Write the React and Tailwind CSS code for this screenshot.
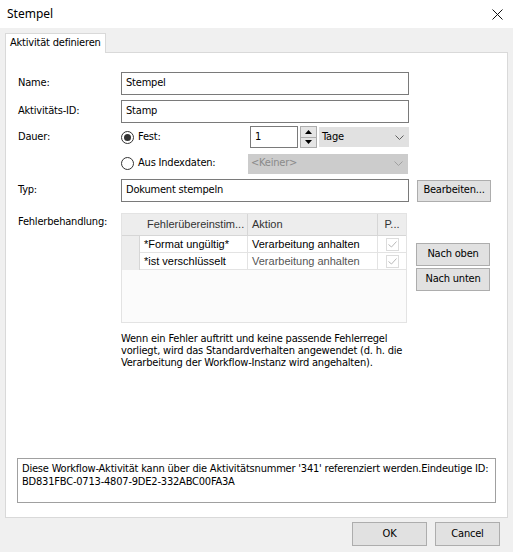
import React from "react";

const font = { fontFamily: '"DejaVu Sans Condensed", "Liberation Sans", sans-serif', letterSpacing: "-0.2px" };

const Chevron = ({ color = "#606060" }) => (
  <svg width="9" height="5" viewBox="0 0 9 5" fill="none">
    <path d="M0.5 0.5 L4.5 4.5 L8.5 0.5" stroke={color} strokeWidth="1" />
  </svg>
);

const Radio = ({ checked }) => (
  <span className="flex h-[13px] w-[13px] items-center justify-center rounded-full border border-[#333] bg-white">
    {checked && <span className="h-[7px] w-[7px] rounded-full bg-[#333]" />}
  </span>
);

const Check = () => (
  <span className="flex h-[13px] w-[13px] items-center justify-center border border-[#dcdcdc] bg-white">
    <svg width="9" height="7" viewBox="0 0 9 7" fill="none">
      <path d="M0.5 3.5 L3.5 6 L8.5 0.5" stroke="#b8b8b8" strokeWidth="1" />
    </svg>
  </span>
);

const Button = ({ children, className = "" }) => (
  <button className={"flex items-center justify-center border border-[#adadad] bg-[#e1e1e1] text-[11px] text-black " + className}>
    {children}
  </button>
);

const Label = ({ children, className = "" }) => (
  <div className={"w-[115px] shrink-0 pl-[12px] text-[11px] text-black " + className}>{children}</div>
);

const TextBox = ({ value }) => (
  <div className="flex h-[23px] w-[288px] items-start border border-[#7a7a7a] bg-white px-[4px] pt-[2px] text-[11px] text-black">
    {value}
  </div>
);

const rows = [
  { match: "*Format ungültig*", action: "Verarbeitung anhalten", dim: false },
  { match: "*ist verschlüsselt", action: "Verarbeitung anhalten", dim: true },
];

const App = () => {
  return (
    <div className="flex h-[552px] w-[513px] flex-col bg-[#f0f0f0]" style={font}>
      {/* Title bar */}
      <div className="flex h-[28px] shrink-0 items-center justify-between bg-white pl-[7px] pr-[10px]">
        <span className="text-[12px] text-black" style={{ fontFamily: '"Noto Sans", "Liberation Sans", sans-serif', letterSpacing: 0 }}>
          Stempel
        </span>
        <svg width="11" height="11" viewBox="0 0 11 11">
          <path d="M0.5 0.5 L10.5 10.5 M10.5 0.5 L0.5 10.5" stroke="#111" strokeWidth="1" />
        </svg>
      </div>

      {/* Tab */}
      <div className="flex shrink-0 pl-[5px] pt-[5px]">
        <div className="relative z-10 -mb-px flex h-[20px] items-center border border-b-0 border-[#d9d9d9] bg-white px-[4px] text-[11px] text-black">
          Aktivität definieren
        </div>
      </div>

      {/* Panel */}
      <div className="mx-[5px] flex h-[466px] shrink-0 flex-col border border-[#d9d9d9] bg-white pt-[19px]">
        <div className="flex items-center">
          <Label>Name:</Label>
          <TextBox value="Stempel" />
        </div>
        <div className="mt-[5px] flex items-center">
          <Label>Aktivitäts-ID:</Label>
          <TextBox value="Stamp" />
        </div>

        {/* Dauer */}
        <div className="mt-[3px] flex h-[22px] items-center">
          <Label>Dauer:</Label>
          <div className="flex w-[129px] items-center gap-[4px] text-[11px]">
            <Radio checked />
            <span>Fest:</span>
          </div>
          <div className="flex h-[22px] w-[48px] items-start border border-[#7a7a7a] bg-white px-[4px] pt-[2px] text-[11px]">1</div>
          <div className="ml-[2px] flex h-[22px] w-[17px] flex-col border border-[#adadad] bg-[#e5e5e5]">
            <div className="flex flex-1 items-center justify-center border-b border-[#adadad]">
              <svg width="7" height="4" viewBox="0 0 7 4"><path d="M0 4 L3.5 0 L7 4 Z" fill="#000" /></svg>
            </div>
            <div className="flex flex-1 items-center justify-center">
              <svg width="7" height="4" viewBox="0 0 7 4"><path d="M0 0 L3.5 4 L7 0 Z" fill="#000" /></svg>
            </div>
          </div>
          <div className="ml-[2px] flex h-[20px] w-[90px] items-center justify-between bg-[#e1e1e1] pl-[3px] pr-[5px] text-[11px]">
            <span>Tage</span>
            <Chevron />
          </div>
        </div>

        <div className="mt-[5px] flex h-[21px] items-center">
          <div className="w-[115px] shrink-0" />
          <div className="flex w-[127px] items-center gap-[4px] text-[11px]">
            <Radio />
            <span>Aus Indexdaten:</span>
          </div>
          <div className="flex h-[20px] w-[160px] items-center justify-between bg-[#cccccc] pl-[3px] pr-[5px] text-[11px] text-[#8a8a8a]">
            <span>&lt;Keiner&gt;</span>
            <Chevron color="#a0a0a0" />
          </div>
        </div>

        {/* Typ */}
        <div className="mt-[5px] flex items-center">
          <Label>Typ:</Label>
          <TextBox value="Dokument stempeln" />
          <Button className="ml-[8px] h-[22px] w-[74px]">Bearbeiten...</Button>
        </div>

        {/* Fehlerbehandlung */}
        <div className="mt-[11px] flex items-start">
          <Label className="pt-[1px]">Fehlerbehandlung:</Label>
          <div className="flex w-[286px] flex-col">
            <div
              className="flex h-[110px] w-[286px] flex-col border border-[#e3e3e3] bg-[#fbfbfb] text-[11px]"
              style={{ fontFamily: '"Liberation Sans", Arial, sans-serif', letterSpacing: 0 }}
            >
              <div className="flex h-[22px] border-b border-[#d6d6d6] bg-[#ededed] text-[#333]">
                <div className="w-[18px] shrink-0" />
                <div className="flex w-[108px] items-center border-r border-[#d6d6d6] pl-[7px]">Fehlerübereinstim...</div>
                <div className="flex w-[130px] items-center border-r border-[#d6d6d6] pl-[4px]">Aktion</div>
                <div className="flex flex-1 items-center justify-center">P...</div>
              </div>
              {rows.map((r) => (
                <div key={r.match} className="flex h-[17px]">
                  <div className="w-[18px] shrink-0 border-r border-[#d6d6d6] bg-[#ededed]" />
                  <div className="flex w-[108px] items-center border-r border-b border-[#e3e3e3] bg-white pl-[4px] text-black">{r.match}</div>
                  <div className={"flex w-[130px] items-center border-r border-b border-[#e3e3e3] bg-white pl-[4px] " + (r.dim ? "text-[#555]" : "text-black")}>
                    {r.action}
                  </div>
                  <div className="flex flex-1 items-center justify-center border-b border-[#e3e3e3] bg-white">
                    <Check />
                  </div>
                </div>
              ))}
            </div>
            <p className="mt-[10px] w-[288px] text-[11px] leading-[12px] text-black">
              Wenn ein Fehler auftritt und keine passende Fehlerregel vorliegt, wird das Standardverhalten angewendet (d. h. die Verarbeitung der Workflow-Instanz wird angehalten).
            </p>
          </div>
          <div className="ml-[9px] mt-[30px] flex flex-col gap-[2px]">
            <Button className="h-[23px] w-[74px]">Nach oben</Button>
            <Button className="h-[23px] w-[74px]">Nach unten</Button>
          </div>
        </div>

        {/* Info box */}
        <div className="mt-auto mb-[14px] ml-[11px] mr-[11px] h-[45px] border border-[#a0a0a0] bg-white px-[4px] pt-[3px] text-[11px] leading-[13px] text-black">
          Diese Workflow-Aktivität kann über die Aktivitätsnummer '341' referenziert werden.Eindeutige ID: BD831FBC-0713-4807-9DE2-332ABC00FA3A
        </div>
      </div>

      {/* Footer buttons */}
      <div className="flex justify-end gap-[8px] pr-[13px] pt-[4px]">
        <Button className="h-[24px] w-[75px] border-[#0078d7]">OK</Button>
        <Button className="h-[24px] w-[65px]">Cancel</Button>
      </div>
    </div>
  );
};

export default App;
